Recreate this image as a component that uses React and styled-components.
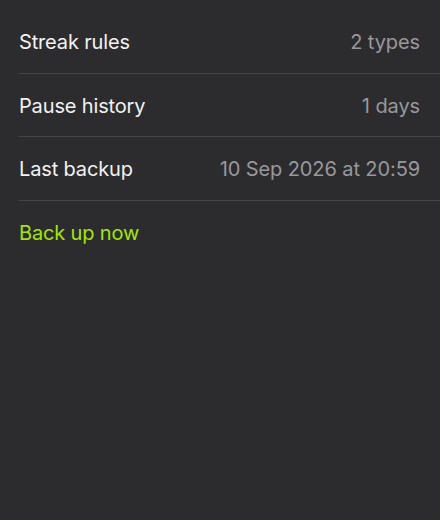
import React from "react";
import styled, { createGlobalStyle } from "styled-components";

const GlobalStyle = createGlobalStyle`
  html, body {
    margin: 0;
    padding: 0;
    background: #2c2c2e;
  }
  body {
    font-family: Inter, "Open Sans", "Liberation Sans", sans-serif;
    -webkit-font-smoothing: antialiased;
  }
`;

const Page = styled.div`
  min-height: 520px;
  background: #2c2c2e;
  padding-top: 10px;
  box-sizing: border-box;
`;

const List = styled.div`
  display: flex;
  flex-direction: column;
  padding-left: 19px;
`;

const Row = styled.div`
  display: flex;
  align-items: center;
  justify-content: space-between;
  height: 63.5px;
  padding: 2px 20px 0 0;
  border-bottom: ${(p) => (p.$last ? "none" : "1px solid #434345")};
  box-sizing: border-box;
`;

const Label = styled.span`
  font-size: 20px;
  letter-spacing: -0.15px;
  color: ${(p) => (p.$accent ? "#a3e40f" : "#f2f2f4")};
`;

const Value = styled.span`
  font-size: 20px;
  letter-spacing: -0.1px;
  color: #98989d;
`;

const rows = [
  { label: "Streak rules", value: "2 types" },
  { label: "Pause history", value: "1 days" },
  { label: "Last backup", value: "10 Sep 2026 at 20:59" },
];

export default function App() {
  return (
    <Page>
      <GlobalStyle />
      <List>
        {rows.map((r) => (
          <Row key={r.label}>
            <Label>{r.label}</Label>
            <Value>{r.value}</Value>
          </Row>
        ))}
        <Row $last>
          <Label $accent>Back up now</Label>
        </Row>
      </List>
    </Page>
  );
}
